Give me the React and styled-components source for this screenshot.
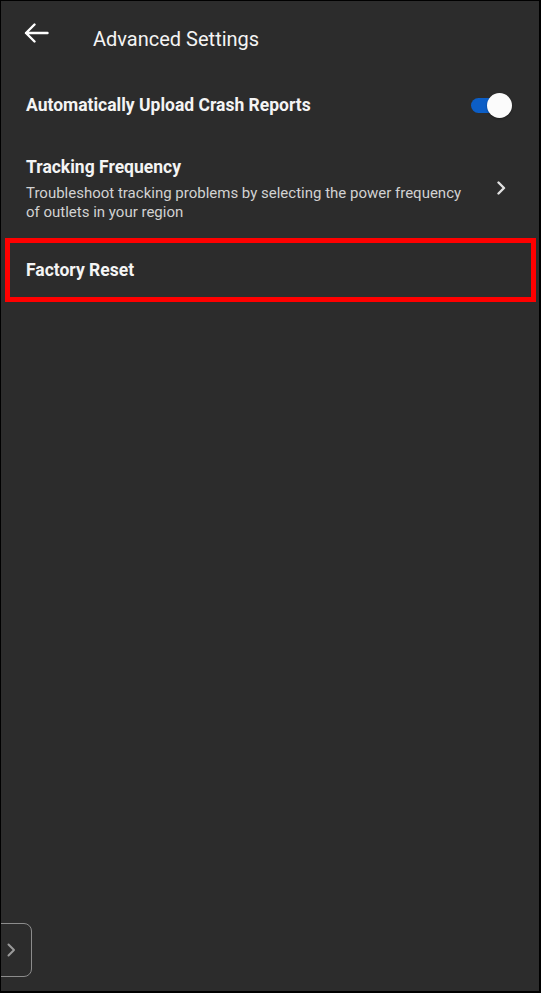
import React from "react";
import styled, { createGlobalStyle } from "styled-components";

const GlobalStyle = createGlobalStyle`
  html, body {
    margin: 0;
    padding: 0;
    background: #000;
  }
  * {
    box-sizing: border-box;
  }
`;

const Screen = styled.div`
  position: relative;
  display: flex;
  flex-direction: column;
  height: 100vh;
  background: #2c2c2c;
  border-style: solid;
  border-color: #000;
  border-width: 1px 2px 2px 1px;
  overflow: hidden;
  font-family: Roboto, "Liberation Sans", sans-serif;
  color: #f4f4f4;
`;

const Header = styled.header`
  display: flex;
  align-items: center;
  height: 64px;
  padding-left: 23px;
  gap: 44px;
  svg {
    width: 25px;
    height: 20px;
    flex-shrink: 0;
  }
`;

const Title = styled.h1`
  margin: 0;
  font-size: 20px;
  font-weight: 400;
  line-height: 24px;
  padding-top: 12px;
`;

const Row = styled.div`
  display: flex;
  align-items: center;
  justify-content: space-between;
  gap: 24px;
  padding: ${(p) => p.$padding || "0 25px"};
  height: ${(p) => p.$height || "auto"};
`;

const Highlight = styled.div`
  margin: 0 3px 0 4px;
  border: 5px solid #ff0000;
  padding: 17px 16px;
`;

const TextBlock = styled.div`
  display: flex;
  flex-direction: column;
  gap: 7px;
  flex: 1;
  min-width: 0;
`;

const Label = styled.div`
  font-size: 17.5px;
  font-weight: 700;
  line-height: 20px;
  color: #f4f4f4;
`;

const Description = styled.div`
  font-size: 15px;
  line-height: 19px;
  color: #d2d2d2;
`;

const Toggle = styled.span`
  position: relative;
  display: inline-block;
  width: 41px;
  height: 25px;
  flex-shrink: 0;
  margin-right: 2px;
  &::before {
    content: "";
    position: absolute;
    left: 0;
    top: 5px;
    width: 34px;
    height: 15px;
    border-radius: 8px;
    background: ${(p) => (p.$on ? "#0c5ec6" : "#777")};
  }
  &::after {
    content: "";
    position: absolute;
    top: 0;
    ${(p) => (p.$on ? "right: 0;" : "left: 0;")}
    width: 25px;
    height: 25px;
    border-radius: 50%;
    background: #fbfbfb;
    box-shadow: 0 1px 2px rgba(0, 0, 0, 0.35);
  }
`;

const Chevron = styled.svg`
  width: 10px;
  height: 14px;
  flex-shrink: 0;
  margin-right: 8px;
  margin-top: -4px;
`;

const SideTab = styled.div`
  position: absolute;
  left: -13px;
  bottom: 14px;
  width: 44px;
  height: 54px;
  display: flex;
  align-items: center;
  padding-left: 17px;
  border: 1.5px solid #8c8c8c;
  border-radius: 8px;
  svg {
    width: 10px;
    height: 14px;
  }
`;

const BackArrow = () => (
  <svg viewBox="0 0 25 20" fill="none" stroke="#fff" strokeWidth="2.4" strokeLinecap="round" strokeLinejoin="round">
    <path d="M23.5 10H2M10.5 1.5L2 10l8.5 8.5" />
  </svg>
);

const ChevronRight = ({ color = "#e0e0e0", width = 2.4 }) => (
  <svg viewBox="0 0 10 14" fill="none" stroke={color} strokeWidth={width} strokeLinecap="round" strokeLinejoin="round">
    <path d="M2.5 1.5L8 7l-5.5 5.5" />
  </svg>
);

const App = () => {
  return (
    <>
      <GlobalStyle />
      <Screen>
        <Header>
          <BackArrow />
          <Title>Advanced Settings</Title>
        </Header>

        <Row $height="80px" $padding="0 25px">
          <Label>Automatically Upload Crash Reports</Label>
          <Toggle $on />
        </Row>

        <Row $padding="12px 25px 16px">
          <TextBlock>
            <Label>Tracking Frequency</Label>
            <Description>
              Troubleshoot tracking problems by selecting the power frequency of outlets in your region
            </Description>
          </TextBlock>
          <Chevron viewBox="0 0 10 14" fill="none" stroke="#e0e0e0" strokeWidth="2.4" strokeLinecap="round" strokeLinejoin="round">
            <path d="M2.5 1.5L8 7l-5.5 5.5" />
          </Chevron>
        </Row>

        <Highlight>
          <Label>Factory Reset</Label>
        </Highlight>

        <SideTab>
          <ChevronRight color="#9a9a9a" width={2} />
        </SideTab>
      </Screen>
    </>
  );
};

export default App;
